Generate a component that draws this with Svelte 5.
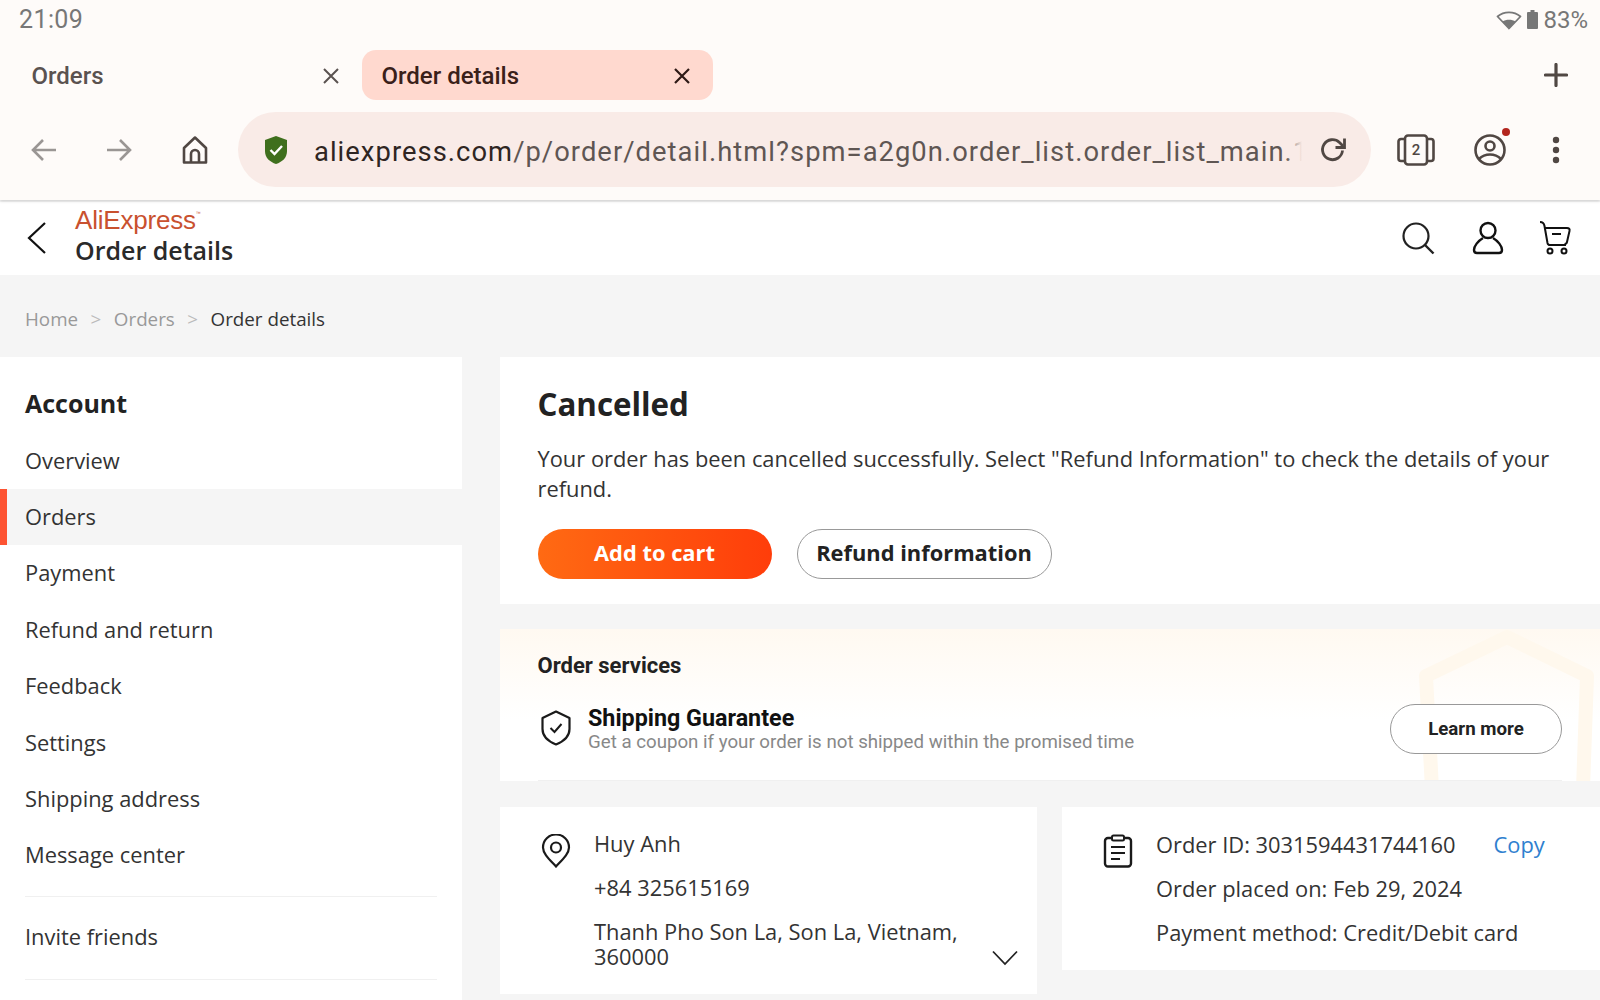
<script>
  const menu = ['Overview', 'Orders', 'Payment', 'Refund and return', 'Feedback', 'Settings', 'Shipping address', 'Message center'];
</script>

<div class="page">
  <div class="chrome">
    <div class="status">
      <span class="time">21:09</span>
      <span class="sys">
        <svg width="26" height="20" viewBox="0 0 26 20"><path d="M13 18.500 1.500 6.500C8 1 18 1 24.500 6.500Z" fill="none" stroke="#777" stroke-width="1.800" stroke-linejoin="round"/><path d="M13 18.500 6.500 11.500C10 9 16 9 19.500 11.500Z" fill="#777"/></svg>
        <svg width="11" height="20" viewBox="0 0 11 20"><path d="M3.500 0h4v2h2.500a1 1 0 0 1 1 1v15a1 1 0 0 1-1 1H1a1 1 0 0 1-1-1V3a1 1 0 0 1 1-1h2.500z" fill="#777"/></svg>
        <span class="pct">83%</span>
      </span>
    </div>
    <div class="tabs">
      <div class="tab"><span>Orders</span>
        <svg class="x" width="20" height="20" viewBox="0 0 20 20"><path d="M3 3 17 17M17 3 3 17" stroke="#5a5250" stroke-width="2"/></svg></div>
      <div class="tab active"><span>Order details</span>
        <svg class="x" width="20" height="20" viewBox="0 0 20 20"><path d="M3 3 17 17M17 3 3 17" stroke="#2f1a16" stroke-width="2.200"/></svg></div>
      <svg class="plus" width="24" height="24" viewBox="0 0 24 24"><path d="M12 1.500v21M1.500 12h21" stroke="#504743" stroke-width="3.200" stroke-linecap="round"/></svg>
    </div>
    <div class="toolbar">
      <div class="nav">
        <svg width="28" height="28" viewBox="0 0 28 28"><path d="M26 14H3M13 4 3 14l10 10" fill="none" stroke="#9a9694" stroke-width="2.600"/></svg>
        <svg width="28" height="28" viewBox="0 0 28 28"><path d="M2 14h23M15 4l10 10-10 10" fill="none" stroke="#9a9694" stroke-width="2.600"/></svg>
        <svg width="30" height="30" viewBox="0 0 30 30"><path d="M15 2.500 4 13v14.500h22V13ZM11 27.500V19a4 4 0 0 1 8 0v8.500" fill="none" stroke="#504743" stroke-width="2.600" stroke-linejoin="round"/></svg>
      </div>
      <div class="url">
        <svg class="shield" width="24" height="30" viewBox="0 0 24 30"><path d="M12 1 23 5v11c0 7-5 11-11 13C6 27 1 23 1 16V5Z" fill="#3f6f1d"/><path d="m6.500 15 4 4 7.500-8" fill="none" stroke="#fff" stroke-width="2.400"/></svg>
        <div class="urltext"><span class="dom">aliexpress.com</span>/p/order/detail.html?spm=a2g0n.order_list.order_list_main.1<span class="fade"></span></div>
        <svg class="reload" width="28" height="28" viewBox="0 0 28 28"><path d="M23.500 14.500A10 10 0 1 1 20.500 6.500L24 10" fill="none" stroke="#504743" stroke-width="2.800"/><path d="M25.500 2.500V11.500H16.500" fill="none" stroke="#504743" stroke-width="2.800"/></svg>
      </div>
      <div class="tools">
        <svg width="38" height="32" viewBox="0 0 38 32"><rect x="8" y="1.500" width="22" height="29" rx="3" fill="none" stroke="#504743" stroke-width="2.600"/><path d="M8 5H4a2.500 2.500 0 0 0-2.500 2.500v17A2.500 2.500 0 0 0 4 27h4M30 5h4a2.500 2.500 0 0 1 2.500 2.500v17A2.500 2.500 0 0 1 34 27h-4" fill="none" stroke="#504743" stroke-width="2.600"/><text x="19" y="21" text-anchor="middle" class="two">2</text></svg>
        <span class="avatar">
          <svg width="34" height="34" viewBox="0 0 34 34"><circle cx="17" cy="17" r="14.500" fill="none" stroke="#504743" stroke-width="2.600"/><circle cx="17" cy="13" r="4.500" fill="none" stroke="#504743" stroke-width="2.600"/><path d="M6 26c6-6 16-6 22 0" fill="none" stroke="#504743" stroke-width="2.600"/></svg>
          <i class="dot"></i>
        </span>
        <svg width="10" height="28" viewBox="0 0 10 28"><circle cx="5" cy="4" r="3.200" fill="#504743"/><circle cx="5" cy="14" r="3.200" fill="#504743"/><circle cx="5" cy="24" r="3.200" fill="#504743"/></svg>
      </div>
    </div>
  </div>

  <header class="head">
    <svg class="back" width="20" height="34" viewBox="0 0 20 34"><path d="M18 2 2 17l16 15" fill="none" stroke="#111" stroke-width="2.200"/></svg>
    <div class="brand">
      <div class="logo">AliExpress<sup>™</sup></div>
      <div class="title">Order details</div>
    </div>
    <div class="headicons">
      <svg width="34" height="34" viewBox="0 0 34 34"><circle cx="15" cy="15" r="12.500" fill="none" stroke="#222" stroke-width="2.200"/><path d="m24 24 8.500 8.500" stroke="#222" stroke-width="2.400"/></svg>
      <svg width="32" height="34" viewBox="0 0 32 34"><circle cx="16" cy="9.500" r="7.500" fill="none" stroke="#111" stroke-width="2.400"/><path d="M11 17C6 20 2 25 2 29c0 2 1 3 3 3h22c2 0 3-1 3-3 0-4-4-9-9-12" fill="none" stroke="#111" stroke-width="2.400"/></svg>
      <svg class="cart" width="32" height="34" viewBox="0 0 32 34"><path d="M1 1c3 0 4 1 4.500 4l3 17c.3 1.500 1 2 2.500 2h16" fill="none" stroke="#111" stroke-width="2"/><path d="M5 7h23c2 0 3 1 2.500 3l-2.500 11c-.3 1.500-1 2-2.500 2" fill="none" stroke="#111" stroke-width="2"/><path d="M13 13h9" stroke="#111" stroke-width="2"/><circle cx="11" cy="30" r="2.500" fill="none" stroke="#111" stroke-width="2"/><circle cx="25" cy="30" r="2.500" fill="none" stroke="#111" stroke-width="2"/></svg>
    </div>
  </header>

  <nav class="crumbs"><span>Home</span><i>&gt;</i><span>Orders</span><i>&gt;</i><b>Order details</b></nav>

  <div class="body">
    <aside class="side">
      <h3>Account</h3>
      {#each menu as m}
        <div class="item" class:on={m === 'Orders'}>{m}</div>
      {/each}
      <div class="rule first"></div>
      <div class="item invite">Invite friends</div>
      <div class="rule"></div>
    </aside>

    <main class="main">
      <section class="status-card">
        <h1>Cancelled</h1>
        <p>Your order has been cancelled successfully. Select "Refund Information" to check the details of your refund.</p>
        <div class="btns">
          <button class="primary">Add to cart</button>
          <button class="ghost">Refund information</button>
        </div>
      </section>

      <section class="services">
        <svg class="bgshield" width="190" height="152" viewBox="0 0 190 152"><path d="M22 160 16 47 97 8l80 39-4 113" fill="none" stroke="#fff8ed" stroke-width="14" stroke-linejoin="round"/></svg>
        <h4>Order services</h4>
        <div class="svc">
          <svg width="32" height="36" viewBox="0 0 32 36"><path d="M16 1.500 29.500 8v11c0 8-6 12.500-13.500 15.500C8.500 31.500 2.500 27 2.500 19V8Z" fill="none" stroke="#1a1a1a" stroke-width="2.200" stroke-linejoin="round"/><path d="m10.500 18 4 4 7-8" fill="none" stroke="#1a1a1a" stroke-width="2"/></svg>
          <div class="svctext">
            <div class="svcname">Shipping Guarantee</div>
            <div class="svcdesc">Get a coupon if your order is not shipped within the promised time</div>
          </div>
          <button class="learn">Learn more</button>
        </div>
        <div class="svcline"></div>
      </section>

      <div class="cards">
        <section class="card addr">
          <svg class="ico" width="30" height="34" viewBox="0 0 30 34"><path d="M15 32.500C8 25 2 19.500 2 13.500a13 13 0 0 1 26 0c0 6-6 11.500-13 19Z" fill="none" stroke="#1a1a1a" stroke-width="2.200"/><circle cx="15" cy="13.500" r="5" fill="none" stroke="#1a1a1a" stroke-width="2.200"/></svg>
          <div class="lines">
            <div>Huy Anh</div>
            <div>+84 325615169</div>
            <div class="addrline">Thanh Pho Son La, Son La, Vietnam, 360000</div>
          </div>
          <svg class="chev" width="26" height="16" viewBox="0 0 26 16"><path d="M1 1.500 13 14 25 1.500" fill="none" stroke="#222" stroke-width="1.800"/></svg>
        </section>
        <section class="card order">
          <svg class="ico" width="30" height="34" viewBox="0 0 30 34"><rect x="2" y="4" width="26" height="28.500" rx="3" fill="none" stroke="#1a1a1a" stroke-width="2.400"/><rect x="9" y="1.500" width="12" height="5" rx="1.500" fill="#fff" stroke="#1a1a1a" stroke-width="2"/><path d="M8 13h14M8 19h14M8 25h9" stroke="#1a1a1a" stroke-width="2.200"/></svg>
          <div class="lines">
            <div class="idrow"><span>Order ID: 3031594431744160</span><span class="copy">Copy</span></div>
            <div>Order placed on: Feb 29, 2024</div>
            <div>Payment method: Credit/Debit card</div>
          </div>
        </section>
      </div>
    </main>
  </div>
</div>

<style>
  :global(body) { margin: 0; background: #f5f5f5; overflow: hidden; }
  .page { width: 1600px; height: 1000px; overflow: hidden; font-family: "Open Sans", sans-serif; color: #2b2b2b; }
  svg { display: block; flex: none; }

  .chrome { height: 200px; background: #fefbf9; box-shadow: 0 1px 3px rgba(0,0,0,.18); position: relative; font-family: Roboto, sans-serif; }
  .status { height: 50px; display: flex; justify-content: space-between; align-items: flex-start; padding: 6px 12px 0 19px; box-sizing: border-box; color: #777; font-size: 25px; }
  .time { line-height: 28px; letter-spacing: .4px; }
  .sys { display: flex; align-items: center; gap: 5px; height: 28px; }
  .pct { font-size: 24px; }

  .tabs { height: 50px; display: flex; align-items: stretch; padding-left: 12px; font-size: 24px; font-weight: 500; color: #5a5250; position: relative; }
  .tab { width: 350px; box-sizing: border-box; display: flex; align-items: center; justify-content: space-between; padding: 1px 21px 0 19.500px; border-radius: 14px; }
  .tab.active { background: #ffd9cf; color: #3a2019; width: 350.500px; }
  .plus { position: absolute; right: 32px; top: 13px; }

  .toolbar { height: 100px; display: flex; align-items: flex-start; padding: 12px 0 0 30px; box-sizing: border-box; }
  .nav { display: flex; align-items: center; gap: 47px; height: 75px; width: 208px; }
  .url { width: 1133px; height: 75px; background: #f9ebe7; border-radius: 38px; display: flex; align-items: center; padding: 0 24px 0 26px; box-sizing: border-box; }
  .shield { margin-right: 26px; }
  .urltext { flex: 1; min-width: 0; font-size: 27.350px; letter-spacing: 1.050px; padding-top: 5px; color: #5f5653; white-space: nowrap; overflow: hidden; position: relative; }
  .dom { color: #2f2522; }
  .fade { position: absolute; right: 0; top: 0; bottom: 0; width: 20px; background: linear-gradient(90deg, rgba(249,235,231,0), #f9ebe7 80%); }
  .reload { margin-left: 13px; }
  .tools { display: flex; align-items: center; height: 75px; padding-left: 26px; gap: 40px; }
  .two { font: 500 15px Roboto, sans-serif; fill: #504743; }
  .avatar { position: relative; display: block; margin-left: -2px; margin-right: 4px; }
  .dot { position: absolute; right: -3px; top: -5px; width: 8px; height: 8px; border-radius: 50%; background: #b3261e; }

  .head { height: 73px; margin-top: 2px; background: #fff; display: flex; align-items: center; padding: 0 29px 0 27px; box-sizing: border-box; }
  .back { margin-right: 28px; margin-bottom: 2px; }
  .brand { flex: 1; }
  .logo { font: 400 26px/26px "Liberation Sans", sans-serif; color: #c9512f; letter-spacing: -.2px; margin-top: -3px; }
  .logo sup { font-size: 5px; vertical-align: 14px; line-height: 0; }
  .title { font-size: 25px; font-weight: 600; line-height: 34px; color: #2a2a2a; margin-top: 0; }
  .headicons { display: flex; align-items: center; gap: 37px; margin-bottom: 2px; }
  .cart { margin-left: -2px; }

  .crumbs { height: 82px; display: flex; align-items: center; padding: 6px 0 0 25px; box-sizing: border-box; font-size: 18.800px; color: #999; gap: 12.500px; }
  .crumbs i { font-style: normal; color: #bbb; }
  .crumbs b { font-weight: 400; color: #333; }

  .body { display: flex; gap: 38px; align-items: flex-start; }
  .side { width: 462px; height: 700px; background: #fff; flex: none; padding-top: 25px; box-sizing: border-box; }
  .side h3 { margin: 0; padding-left: 25px; font-size: 25px; font-weight: 700; line-height: 42px; color: #222; height: 50.600px; }
  .item { height: 56.400px; line-height: 56.400px; padding-left: 25px; font-size: 21.870px; color: #333; }
  .item.on { background: #f5f5f5; box-shadow: inset 7px 0 0 #fd5332; }
  .rule { height: 1px; background: #f0f0f0; margin: 0 25px; }
  .rule.first { margin-top: 12.400px; margin-bottom: 12px; }
  .invite { margin-bottom: 13px; }

  .main { flex: 1; min-width: 0; }
  .status-card { background: #fff; height: 247px; padding: 25px 38px 0 37.500px; box-sizing: border-box; }
  .status-card h1 { margin: 0; font-size: 31.300px; font-weight: 700; line-height: 44px; color: #222; }
  .status-card p { margin: 18px 0 0; font-size: 21.870px; line-height: 30px; color: #333; }
  .btns { display: flex; gap: 25px; margin-top: 25px; }
  button { font-family: inherit; cursor: pointer; }
  .primary { width: 234px; height: 50px; border: 0; border-radius: 25px; background: linear-gradient(90deg, #ff6a13, #ff3d0a); color: #fff; font-size: 21.870px; font-weight: 700; padding-bottom: 5px; }
  .ghost { width: 255px; height: 50px; border: 1px solid #999; border-radius: 25px; background: #fff; color: #222; font-size: 21.870px; font-weight: 700; padding-bottom: 5px; }

  .services { margin-top: 25px; height: 152px; background: linear-gradient(180deg, #fff9f1, #fff 60%); padding: 0 38px 0 37.500px; box-sizing: border-box; position: relative; overflow: hidden; }
  .bgshield { position: absolute; right: 0; top: 0; }
  .services h4 { margin: 0; padding-top: 23px; font: 700 22px/28px Roboto, sans-serif; color: #222; position: relative; }
  .svc { display: flex; align-items: center; margin-top: 24px; position: relative; font-family: Roboto, sans-serif; }
  .svc > svg { margin-left: 2.500px; margin-right: 16px; margin-bottom: 2px; }
  .svctext { flex: 1; }
  .svcname { font-size: 23.300px; font-weight: 700; line-height: 26px; color: #111; }
  .svcdesc { font-size: 18.700px; line-height: 22px; color: #888; }
  .learn { width: 172px; height: 50px; border: 1px solid #999; border-radius: 25px; background: #fff; color: #222; font: 700 18.700px Roboto, sans-serif; }
  .svcline { position: absolute; left: 38px; right: 38px; bottom: 0; height: 1px; background: #f0f0f0; }

  .cards { display: flex; gap: 25px; align-items: flex-start; margin-top: 26px; }
  .card { background: #fff; display: flex; box-sizing: border-box; font-size: 21.870px; color: #333; }
  .addr { width: 537px; height: 187px; padding: 22px 0 0 41px; position: relative; }
  .order { flex: 1; height: 163px; padding: 23px 0 0 41px; }
  .addr .ico { margin-top: 5px; }
  .order .ico { margin-top: 4px; }
  .ico { margin-right: 23px; }
  .lines > div { line-height: 30px; margin-bottom: 14px; }
  .addr .lines { width: 400px; }
  .addrline { line-height: 25px !important; margin-top: 16px; }
  .chev { position: absolute; left: 492px; top: 143px; }
  .idrow { display: flex; gap: 38px; }
  .copy { color: #2f80cf; }
</style>
